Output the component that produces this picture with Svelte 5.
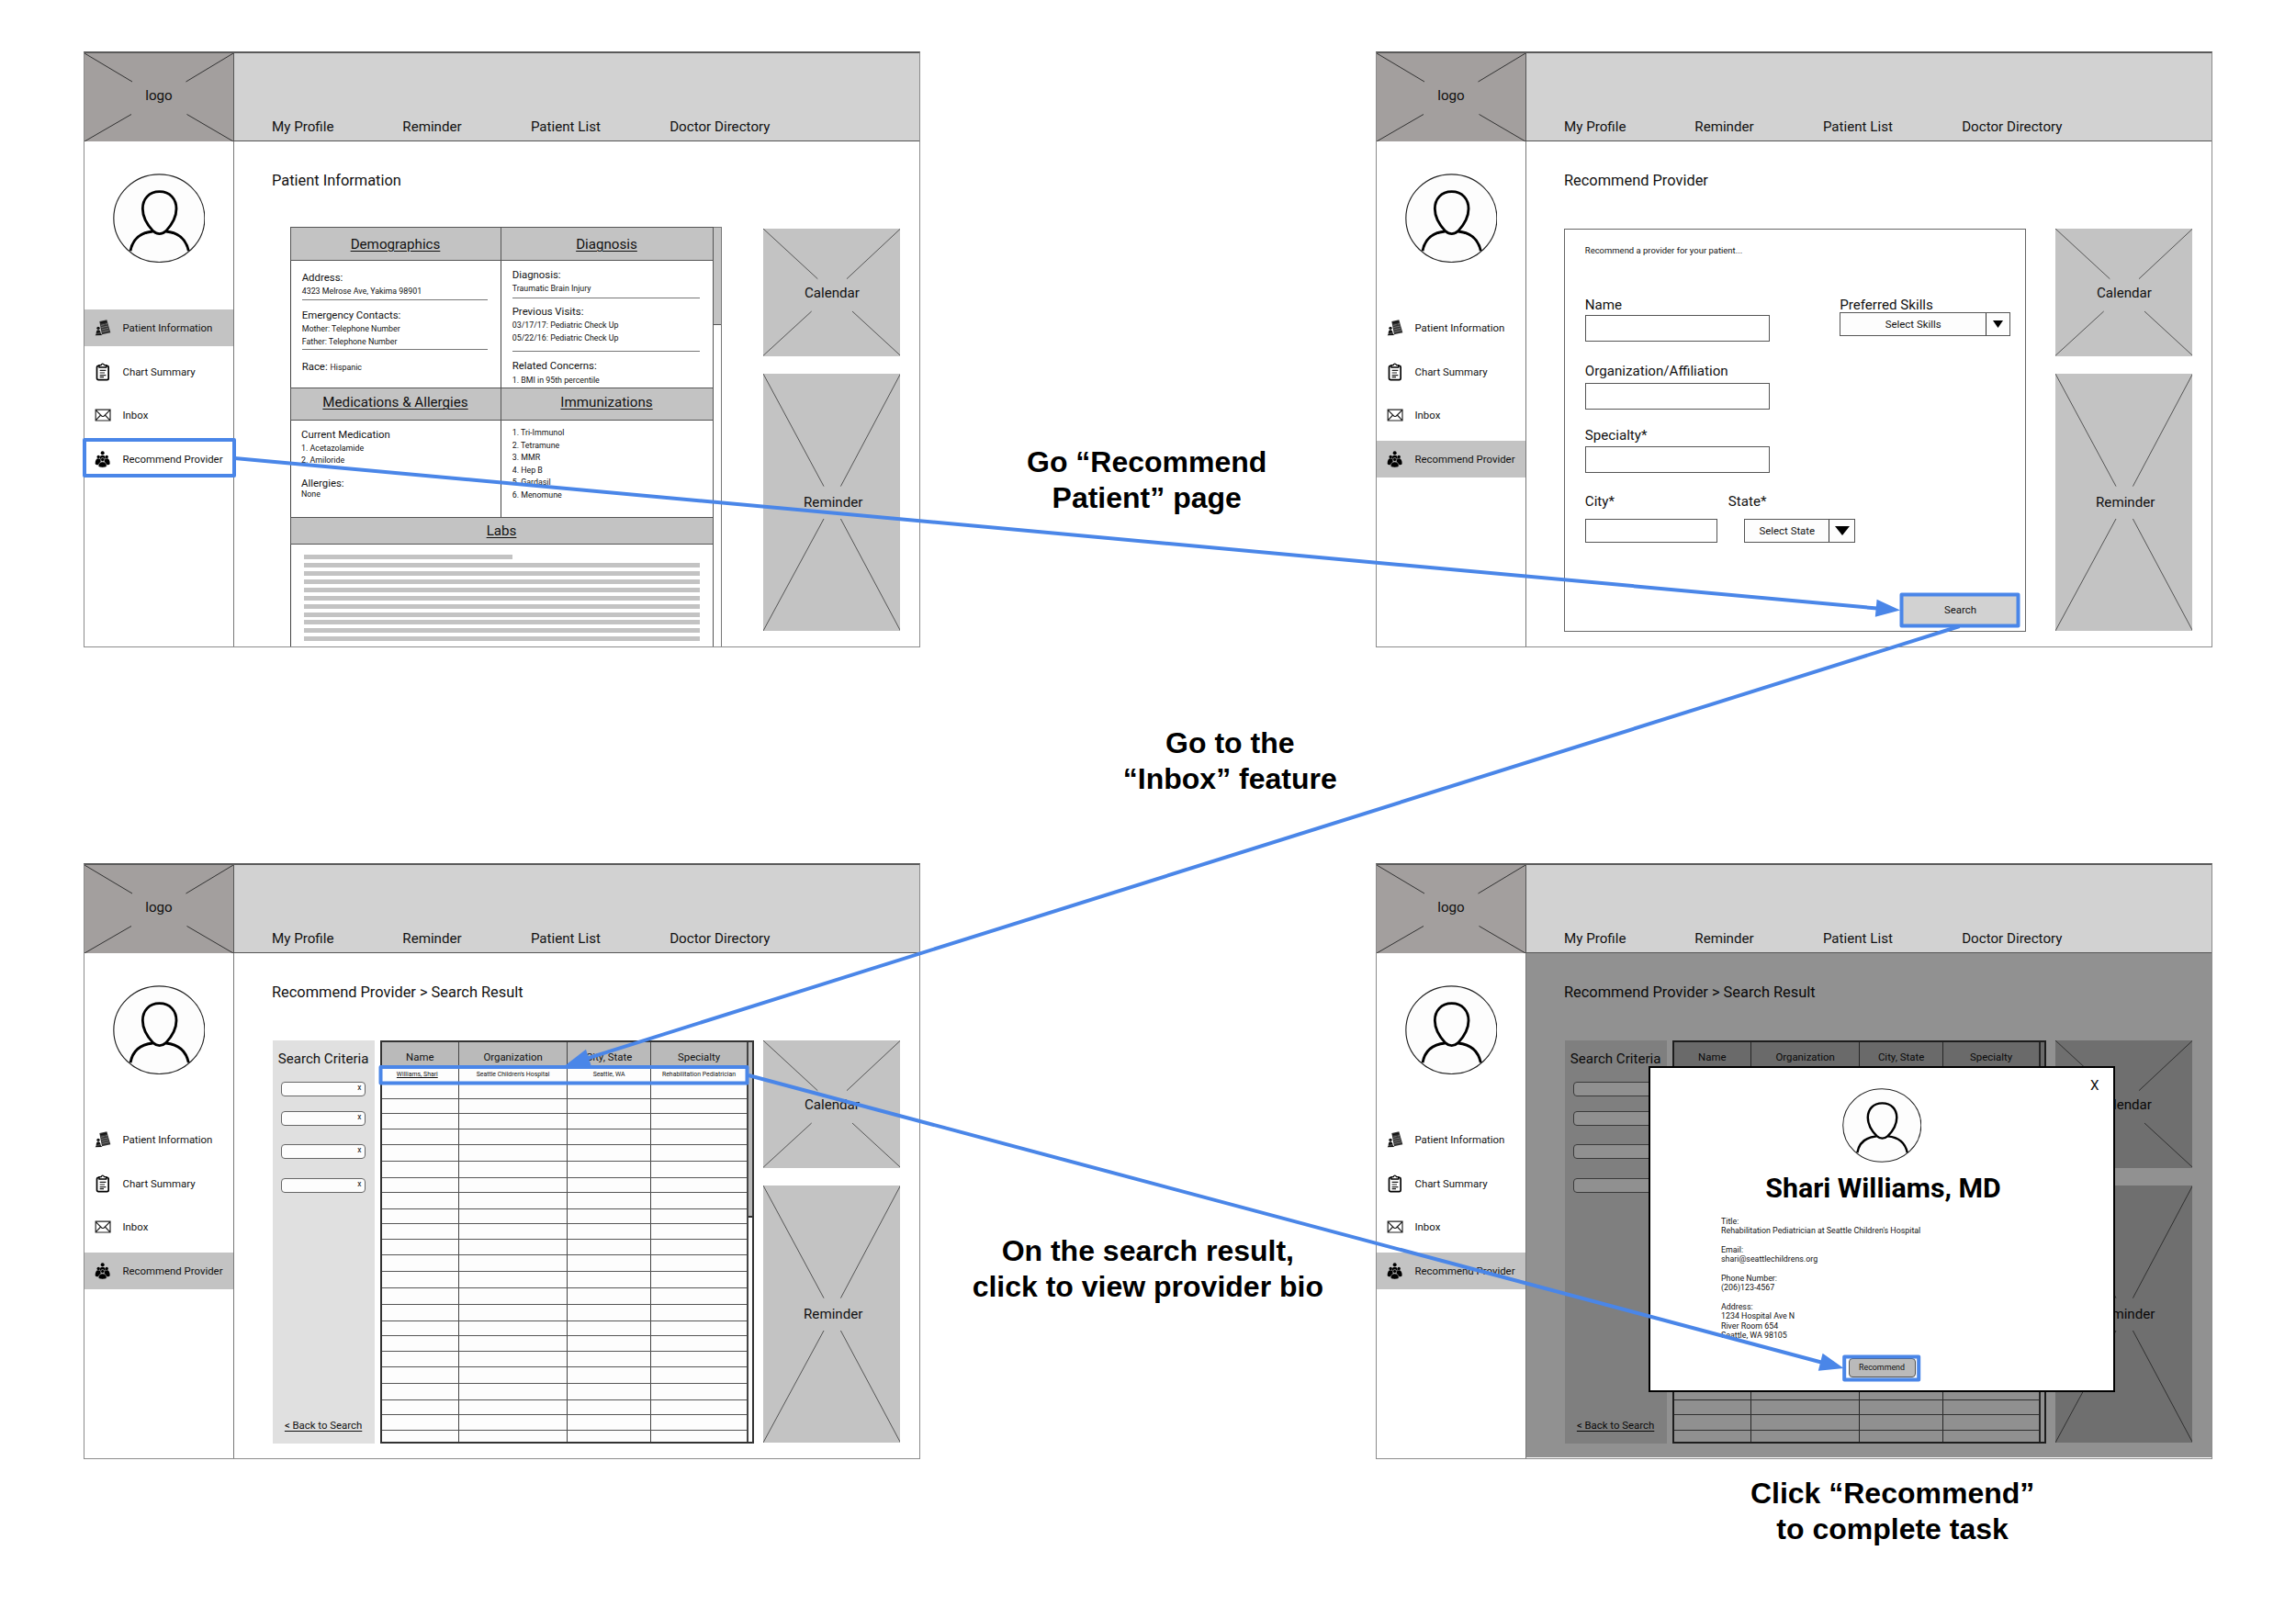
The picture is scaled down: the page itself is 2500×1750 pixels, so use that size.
<script lang="ts">
	type Line = [kind: 'label' | 'value' | 'rule', gap: number, text?: string, extra?: string];

	const nav = ['My Profile', 'Reminder', 'Patient List', 'Doctor Directory'];
	const menu = ['Patient Information', 'Chart Summary', 'Inbox', 'Recommend Provider'];

	const demographics: Line[] = [
		['label', 10.4, 'Address:'],
		['value', 0.9, '4323 Melrose Ave, Yakima 98901'],
		['rule', 1.9],
		['label', 9.6, 'Emergency Contacts:'],
		['value', 0.9, 'Mother: Telephone Number'],
		['value', 0, 'Father: Telephone Number'],
		['rule', 0.5],
		['label', 11.6, 'Race:', 'Hispanic']
	];

	const diagnosis: Line[] = [
		['label', 7.1, 'Diagnosis:'],
		['value', 1.6, 'Traumatic Brain Injury'],
		['rule', 3.1],
		['label', 6.6, 'Previous Visits:'],
		['value', 0.9, '03/17/17: Pediatric Check Up'],
		['value', 0, '05/22/16: Pediatric Check Up'],
		['rule', 6.9],
		['label', 8.6, 'Related Concerns:'],
		['value', 1.5, '1. BMI in 95th percentile']
	];

	const medications: Line[] = [
		['label', 7.3, 'Current Medication'],
		['value', 0.9, '1. Acetazolamide'],
		['value', -0.2, '2. Amiloride'],
		['label', 10.3, 'Allergies:'],
		['value', -2.1, 'None']
	];

	const immunizations: Line[] = [
		['value', 5.5, '1. Tri-Immunol'],
		['value', -0.4, '2. Tetramune'],
		['value', -0.4, '3. MMR'],
		['value', -0.4, '4. Hep B'],
		['value', -0.4, '5. Gardasil'],
		['value', -0.4, '6. Menomune']
	];

	const columns = ['Name', 'Organization', 'City, State', 'Specialty'];
	const result = [
		'Williams, Shari',
		"Seattle Children's Hospital",
		'Seattle, WA',
		'Rehabilitation Pediatrician'
	];
	const rowHeights = [
		19, 15.3, 16, 17.7, 16.3, 18.3, 18, 16, 18, 15.7, 17.7, 16.6, 18, 18, 18, 18, 15.7, 17.3,
		16.7, 18.6, 17.4, 16.6, 17
	];
	const criteriaGaps = [15.4, 16.3, 20, 21.6];

	const bio = [
		['Title:', "Rehabilitation Pediatrician at Seattle Children's Hospital"],
		['Email:', 'shari@seattlechildrens.org'],
		['Phone Number:', '(206)123-4567'],
		['Address:', '1234 Hospital Ave N', 'River Room 654', 'Seattle, WA 98105']
	];

	const captions = [
		{ x: 1248.7, y: 484.4, lines: ['Go “Recommend', 'Patient” page'] },
		{ x: 1339.3, y: 790, lines: ['Go to the', '“Inbox” feature'] },
		{ x: 1249.8, y: 1343, lines: ['On the search result,', 'click to view provider bio'] },
		{ x: 2060.6, y: 1607, lines: ['Click “Recommend”', 'to complete task'] }
	];
</script>

{#snippet avatar()}
	<svg class="avatar" viewBox="128 447 302 292" preserveAspectRatio="none">
		<ellipse cx="279" cy="593" rx="148.5" ry="143.5" fill="#fdfdfd" stroke="#222" stroke-width="3.5" />
		<g fill="none" stroke="#000" stroke-width="8.5">
			<path
				d="M280 506C245 506 225 531 225 562C225 590 243 618 259 635Q280 653 301 635C317 618 335 590 335 562C335 531 315 506 280 506Z"
			/>
			<path d="M185 700C192 661 218 640 258 636M301 636C342 640 367 662 375 700" />
		</g>
	</svg>
{/snippet}

{#snippet icon(i: number)}
	<svg class="icon" viewBox="0 0 60 60">
		{#if i === 0}
			<path d="M19 9L43 4L55 46L27 52Z" fill="#333" />
			<path d="M21 12L42 7.500L43 12L22 16Z" fill="#111" />
			<path
				d="M24 22L35 19.500M38 18.500L45 17M25 29L47 24M27 36L48 31M28 43L50 38"
				stroke="#999"
				stroke-width="2"
			/>
			<circle cx="15" cy="31" r="5" fill="#111" />
			<path d="M8 50Q8 37 15 37Q22 37 23 49L28 54L5 55Z" fill="#111" />
			<path d="M10 49L22 47" stroke="#888" stroke-width="2" />
		{:else if i === 1}
			<rect x="10.500" y="10" width="38" height="46" rx="5" fill="none" stroke="#000" stroke-width="5" />
			<path d="M18 15V8H24Q29 -1 35 8H41V15Z" fill="#fff" stroke="#000" stroke-width="4" />
			<path d="M20 25H40M20 33H36M20 41H40M20 47H33" stroke="#222" stroke-width="3.500" />
		{:else if i === 2}
			<path
				d="M6.500 12.500H54V48H6.500ZM7 14L26 33Q30 36 34 33L53 14M7 47L23 30M53 47L37 30"
				fill="none"
				stroke="#222"
				stroke-width="3.500"
			/>
		{:else}
			<circle cx="29" cy="9.500" r="6" />
			<path d="M20 27Q20 17 29 17Q38 17 38 27L35 36H23Z" />
			<circle cx="15.500" cy="22.500" r="5" />
			<circle cx="42.500" cy="22.500" r="5" />
			<path d="M5 45Q5 28 15 28Q23 28 23 38L16 48Q7 50 5 45Z" />
			<path d="M53 45Q53 28 43 28Q35 28 35 38L42 48Q51 50 53 45Z" />
			<circle cx="29" cy="31.500" r="6" stroke="#bbb" stroke-width="2" />
			<path d="M15.500 53Q16 39 29 39Q42 39 42.500 53Q38 57 29 57Q20 57 15.500 53Z" stroke="#bbb" stroke-width="1.500" />
		{/if}
	</svg>
{/snippet}

{#snippet widgets()}
	<aside class="widgets">
		<div class="widget calendar">
			<svg viewBox="0 0 149.5 138.3">
				<path d="M0 0L59.300 54.700M149.500 0L91 54.700M0 138.300L52.700 90M149.500 138.300L97 90" />
			</svg>
			<span>Calendar</span>
		</div>
		<div class="widget reminder">
			<svg viewBox="0 0 149.5 280">
				<path d="M0 0L66 122.600M149.500 0L84.400 122.600M0 280L66 158M149.500 280L84.400 158" />
			</svg>
			<span>Reminder</span>
		</div>
	</aside>
{/snippet}

{#snippet lines(items: Line[])}
	{#each items as [kind, gap, text, extra]}
		<div class={kind} style:margin-top="{gap}px">
			{text ?? ''}
			{#if extra}<small>{extra}</small>{/if}
		</div>
	{/each}
{/snippet}

{#snippet patientRecord()}
	<div class="record">
		<div class="sections">
			<h3>Demographics</h3>
			<h3>Diagnosis</h3>
			<div class="section">{@render lines(demographics)}</div>
			<div class="section">{@render lines(diagnosis)}</div>
			<h3 class="second">Medications &amp; Allergies</h3>
			<h3 class="second">Immunizations</h3>
			<div class="section meds">{@render lines(medications)}</div>
			<div class="section">{@render lines(immunizations)}</div>
			<h3 class="wide">Labs</h3>
			<div class="section wide labs">
				{#each { length: 11 } as _, i}
					<div class="bar" class:short={i === 0}></div>
				{/each}
			</div>
		</div>
		<div class="scrollbar"><div class="thumb"></div></div>
	</div>
{/snippet}

{#snippet select(text: string, kind: string)}
	<div class="select {kind}">
		<span>{text}</span>
		<i><svg viewBox="0 0 10 6" preserveAspectRatio="none"><path d="M0 0H10L5 6Z" /></svg></i>
	</div>
{/snippet}

{#snippet providerForm()}
	<div class="form">
		<p>Recommend a provider for your patient...</p>
		<div class="fields">
			<div class="left">
				<div class="caption">Name</div>
				<div class="input name"></div>
				<div class="caption">Organization/Affiliation</div>
				<div class="input org"></div>
				<div class="caption">Specialty*</div>
				<div class="input specialty"></div>
				<div class="place">
					<div class="caption">City*</div>
					<div class="caption">State*</div>
				</div>
				<div class="place-inputs">
					<div class="input city"></div>
					{@render select('Select State', 'state')}
				</div>
			</div>
			<div class="right">
				<div class="caption">Preferred Skills</div>
				{@render select('Select Skills', 'skills')}
			</div>
		</div>
		<div class="search">Search</div>
	</div>
{/snippet}

{#snippet searchResult()}
	<div class="results">
		<div class="criteria">
			<h4>Search Criteria</h4>
			{#each criteriaGaps as gap}
				<div class="pill" style:margin-top="{gap}px">x</div>
			{/each}
			<u>&lt; Back to Search</u>
		</div>
		<div class="table">
			<div class="rows">
				<div class="row head">
					{#each columns as column}<span>{column}</span>{/each}
				</div>
				{#each rowHeights as height, i}
					<div class="row" style:height="{height}px">
						{#each columns as _, c}<span>{i === 0 ? result[c] : ''}</span>{/each}
					</div>
				{/each}
				<div class="row last">
					{#each columns as _}<span></span>{/each}
				</div>
			</div>
			<div class="track"><div class="thumb"></div></div>
		</div>
	</div>
{/snippet}

{#snippet screen(place: string, active: number, title: string, content: any, dimmed = false)}
	<section class="screen {place}">
		<div class="logo">
			<svg viewBox="0 0 162 96" preserveAspectRatio="none">
				<path d="M0 0L52 31M162 0L110.500 31M0 96L51 66.500M162 96L111.500 66.500" />
			</svg>
			<span>logo</span>
		</div>
		<nav>
			{#each nav as item}<span>{item}</span>{/each}
		</nav>
		<div class="sidebar">
			{@render avatar()}
			<ul>
				{#each menu as item, i}
					<li class:active={i === active}>{@render icon(i)}{item}</li>
				{/each}
			</ul>
		</div>
		<main>
			<h2>{title}</h2>
			<div class="body">
				<div class="content">{@render content()}</div>
				{@render widgets()}
			</div>
			{#if dimmed}<div class="dim"></div>{/if}
		</main>
		{#if dimmed}
			<div class="modal">
				<span class="close">X</span>
				{@render avatar()}
				<h1>Shari Williams, MD</h1>
				<div class="bio">
					{#each bio as group}
						<div class="group">
							{#each group as line}<div>{line}</div>{/each}
						</div>
					{/each}
				</div>
				<div class="recommend">Recommend</div>
			</div>
		{/if}
	</section>
{/snippet}

<div class="canvas">
	{@render screen('one', 0, 'Patient Information', patientRecord)}
	{@render screen('two', 3, 'Recommend Provider', providerForm)}
	{@render screen('three', 3, 'Recommend Provider > Search Result', searchResult)}
	{@render screen('four', 3, 'Recommend Provider > Search Result', searchResult, true)}

	{#each captions as { x, y, lines }}
		<div class="note" style:left="{x}px" style:top="{y}px">
			{#each lines as line}<div>{line}</div>{/each}
		</div>
	{/each}

	<svg class="flow" viewBox="0 0 2500 1750">
		<g fill="none" stroke="#4a86e8" stroke-width="4" stroke-linejoin="round">
			<!-- highlighted click targets -->
			<rect x="92" y="479" width="163" height="39" />
			<rect x="2070.500" y="647.500" width="127" height="34" />
			<rect x="414.500" y="1162" width="399" height="17.500" />
			<rect x="2008.200" y="1477.500" width="81" height="25" />
			<path d="M255.500 499L2044 662.500M2133.600 682L640 1152.300M815 1171L1983 1483.500" />
		</g>
		<g fill="#4a86e8">
			<path d="M2069 664.500L2041.800 671.800L2043.600 652.800Z" />
			<path d="M615.700 1160L638 1142.800L643.900 1161.300Z" />
			<path d="M2007.500 1490L1979.800 1492.700L1984.600 1473.800Z" />
		</g>
	</svg>
</div>

<style>
	:global(body) {
		background: #fff;
	}

	.canvas {
		position: relative;
		width: 2500px;
		height: 1750px;
		overflow: hidden;
		font-family: Roboto, sans-serif;
		color: #111;
	}

	h1,
	h2,
	h3,
	h4,
	p,
	ul {
		margin: 0;
		padding: 0;
		font-weight: 400;
	}

	.screen {
		position: absolute;
		box-sizing: border-box;
		width: 911px;
		height: 649px;
		border: 1px solid #8c8c8c;
		border-top: 2px solid #5a5a5a;
		display: grid;
		grid-template: 96px 550px / 163px 746px;
		font-size: 15.15px;
		line-height: 20px;
		background: #fff;
	}

	.one {
		left: 91px;
		top: 56px;
	}

	.two {
		left: 1498px;
		top: 56px;
	}

	.three {
		left: 91px;
		top: 940px;
	}

	.four {
		left: 1498px;
		top: 940px;
	}

	.logo {
		position: relative;
		display: flex;
		align-items: center;
		justify-content: center;
		border-right: 1px solid #555;
		background: #a39f9e;
	}

	.logo svg,
	.widget svg {
		position: absolute;
		inset: 0;
		width: 100%;
		height: 100%;
		fill: none;
		stroke: #333;
		stroke-width: 1;
	}

	.widget svg {
		stroke: #555;
	}

	.logo span,
	.widget span {
		position: relative;
	}

	.logo span {
		padding-bottom: 4px;
	}

	nav {
		display: grid;
		grid-template-columns: 142.3px 139.6px 151.3px auto;
		align-items: end;
		padding: 0 0 5px 41px;
		border-bottom: 1px solid #555;
		background: #d2d2d2;
	}

	.sidebar {
		display: flex;
		flex-direction: column;
		align-items: center;
		border-right: 1px solid #777;
		padding-top: 35px;
	}

	.avatar {
		display: block;
		width: 100.7px;
		height: 97.3px;
	}

	ul {
		align-self: stretch;
		display: flex;
		flex-direction: column;
		gap: 7.4px;
		margin-top: 51.2px;
		list-style: none;
	}

	li {
		display: flex;
		align-items: center;
		gap: 11.8px;
		height: 40px;
		padding-left: 9.7px;
		font-size: 11.4px;
	}

	li.active {
		background: #c3c3c3;
	}

	.icon {
		width: 20px;
		height: 20px;
	}

	main {
		position: relative;
		display: flex;
		flex-direction: column;
		overflow: hidden;
		padding: 33.1px 0 0 41px;
	}

	h2 {
		font-size: 16.4px;
	}

	.body {
		display: grid;
		grid-template-columns: 534.7px 149.5px;
		height: 456px;
		margin-top: 42.4px;
	}

	.widgets {
		display: flex;
		flex-direction: column;
		gap: 19.5px;
	}

	.widget {
		position: relative;
		display: flex;
		align-items: center;
		justify-content: center;
		background: #c3c3c3;
	}

	.calendar {
		height: 138.3px;
	}

	.reminder {
		height: 280px;
	}

	.calendar span {
		top: 0.3px;
		left: 0.5px;
	}

	.reminder span {
		left: 1.8px;
	}

	/* Patient record */

	.record {
		display: flex;
		width: 470px;
		height: 458px;
		margin: -2px 0 0 20px;
	}

	.sections {
		display: grid;
		grid-template: 37px 138px 36px 105px 30px 1fr / 229px 231px;
		border-right: 1px solid #555;
	}

	h3 {
		display: flex;
		align-items: center;
		justify-content: center;
		padding-right: 1px;
		border: 1px solid #555;
		border-right: 0;
		background: #c3c3c3;
		font-size: 15.15px;
		text-decoration: underline;
		text-underline-offset: 2px;
		text-decoration-thickness: 1px;
	}

	h3.second {
		padding-bottom: 4px;
	}

	.section {
		padding: 0 14px 0 11.7px;
		border-left: 1px solid #444;
	}

	.section.meds {
		padding-left: 11px;
	}

	.wide {
		grid-column: 1 / 3;
	}

	.label {
		font-size: 11.4px;
		line-height: 14px;
	}

	.label small {
		font-size: 8.85px;
	}

	.value {
		font-size: 8.85px;
		line-height: 14px;
	}

	.rule {
		height: 1px;
		background: #777;
	}

	.section.labs {
		padding: 11px 14px 0 13.7px;
	}

	.bar {
		height: 5px;
		margin-bottom: 3.87px;
		background: #c3c3c3;
	}

	.bar.short {
		width: 227px;
	}

	.scrollbar {
		box-sizing: border-box;
		width: 9px;
		border: 1px solid #777;
		border-left: 0;
		background: #fff;
	}

	.scrollbar .thumb {
		height: 105px;
		border-bottom: 1px solid #555;
		background: #c3c3c3;
	}

	/* Provider form */

	.form {
		box-sizing: border-box;
		display: flex;
		flex-direction: column;
		width: 503px;
		height: 439px;
		padding: 15.5px 7px 6px 21.8px;
		border: 1px solid #666;
	}

	.form p {
		font-size: 9.47px;
		line-height: 14px;
		margin-bottom: 41.8px;
	}

	.fields {
		display: grid;
		grid-template-columns: 277.4px auto;
	}

	.input {
		flex: none;
		box-sizing: border-box;
		width: 201px;
		height: 29px;
		border: 1px solid #555;
	}

	.input.name {
		margin: 1px 0 22.1px;
	}

	.input.org {
		margin: 3.5px 0 18px;
	}

	.input.specialty {
		margin: 2px 0 20.4px;
	}

	.input.city {
		width: 144px;
		height: 26px;
	}

	.place {
		display: grid;
		grid-template-columns: 156px auto;
	}

	.place-inputs {
		display: flex;
		gap: 29.5px;
		margin-top: 9.7px;
	}

	.select {
		flex: none;
		box-sizing: border-box;
		display: grid;
		height: 26px;
		border: 1px solid #555;
		background: #fdfdfd;
		font-size: 11.4px;
	}

	.select span,
	.select i {
		display: flex;
		align-items: center;
		justify-content: center;
	}

	.select i {
		border-left: 1px solid #333;
	}

	.select.state {
		grid-template-columns: 91px 28px;
	}

	.select.skills {
		width: 186px;
		grid-template-columns: 158px 26px;
		margin-top: -2px;
	}

	.state svg {
		width: 16px;
		height: 10px;
	}

	.skills svg {
		width: 11px;
		height: 8px;
	}

	.search {
		display: flex;
		align-items: center;
		justify-content: center;
		align-self: flex-end;
		width: 127px;
		height: 34px;
		margin-top: auto;
		background: #d2d2d2;
		font-size: 11.4px;
	}

	/* Search result */

	.results {
		display: flex;
		gap: 6.2px;
		height: 439px;
		margin-left: 0.6px;
	}

	.criteria {
		box-sizing: border-box;
		display: flex;
		flex-direction: column;
		align-items: center;
		width: 111px;
		padding: 9.4px 0 13px;
		background: #e0e0e0;
	}

	.criteria h4 {
		font-size: 15.1px;
	}

	.criteria u {
		margin-top: auto;
		font-size: 11.4px;
		line-height: 14px;
		text-underline-offset: 2px;
	}

	.pill {
		box-sizing: border-box;
		width: 92.5px;
		height: 15.7px;
		padding-right: 4px;
		border: 1px solid #666;
		border-radius: 4px;
		background: #fdfdfd;
		font-size: 8.5px;
		line-height: 11px;
		text-align: right;
	}

	.table {
		box-sizing: border-box;
		display: flex;
		width: 407px;
		height: 439px;
		border: 2px solid #333;
		background: #fdfdfd;
	}

	.rows {
		display: flex;
		flex-direction: column;
		width: 397.5px;
		border-right: 2px solid #444;
	}

	.row {
		flex: none;
		box-sizing: border-box;
		display: grid;
		grid-template-columns: 83px 118.6px 90.4px auto;
		border-bottom: 1px solid #555;
		font-size: 6.9px;
		line-height: 17px;
		text-align: center;
	}

	.row span + span {
		border-left: 1px solid #444;
	}

	.row:nth-child(2) span:first-child {
		padding-right: 6px;
		text-decoration: underline;
	}

	.row.head {
		height: 27px;
		background: #bababa;
		font-size: 11.4px;
		line-height: 33px;
	}

	.row.last {
		flex: 1;
		border: 0;
	}

	.track {
		flex: 1;
	}

	.track .thumb {
		height: 189px;
		border-bottom: 2px solid #333;
		background: #bababa;
	}

	/* Provider bio */

	.dim {
		position: absolute;
		inset: 0 0 1px;
		background: rgba(0, 0, 0, 0.43);
	}

	.modal {
		position: absolute;
		left: 296px;
		top: 219px;
		box-sizing: border-box;
		display: flex;
		flex-direction: column;
		align-items: center;
		width: 508px;
		height: 355px;
		padding-top: 21.6px;
		border: 2px solid #000;
		background: #fff;
	}

	.modal .avatar {
		flex: none;
		width: 86.5px;
		height: 81px;
	}

	.close {
		position: absolute;
		top: 9.3px;
		right: 15.5px;
	}

	h1 {
		margin: 10px 0 13px 3px;
		font-size: 30.3px;
		font-weight: 700;
		line-height: 36px;
		color: #000;
	}

	.bio {
		align-self: flex-start;
		margin-left: 77px;
		font-size: 8.85px;
		line-height: 10.36px;
	}

	.group + .group {
		margin-top: 10.36px;
	}

	.recommend {
		box-sizing: border-box;
		width: 73px;
		height: 21px;
		margin-top: 20px;
		border: 1px solid #555;
		border-radius: 4px;
		background: #bababa;
		font-size: 8.9px;
		line-height: 19px;
		text-align: center;
	}

	.note {
		position: absolute;
		transform: translateX(-50%);
		font: 700 32px/39px 'Liberation Sans', Arial, sans-serif;
		text-align: center;
		white-space: nowrap;
		color: #000;
	}

	.flow {
		position: absolute;
		inset: 0;
		width: 2500px;
		height: 1750px;
	}
</style>
